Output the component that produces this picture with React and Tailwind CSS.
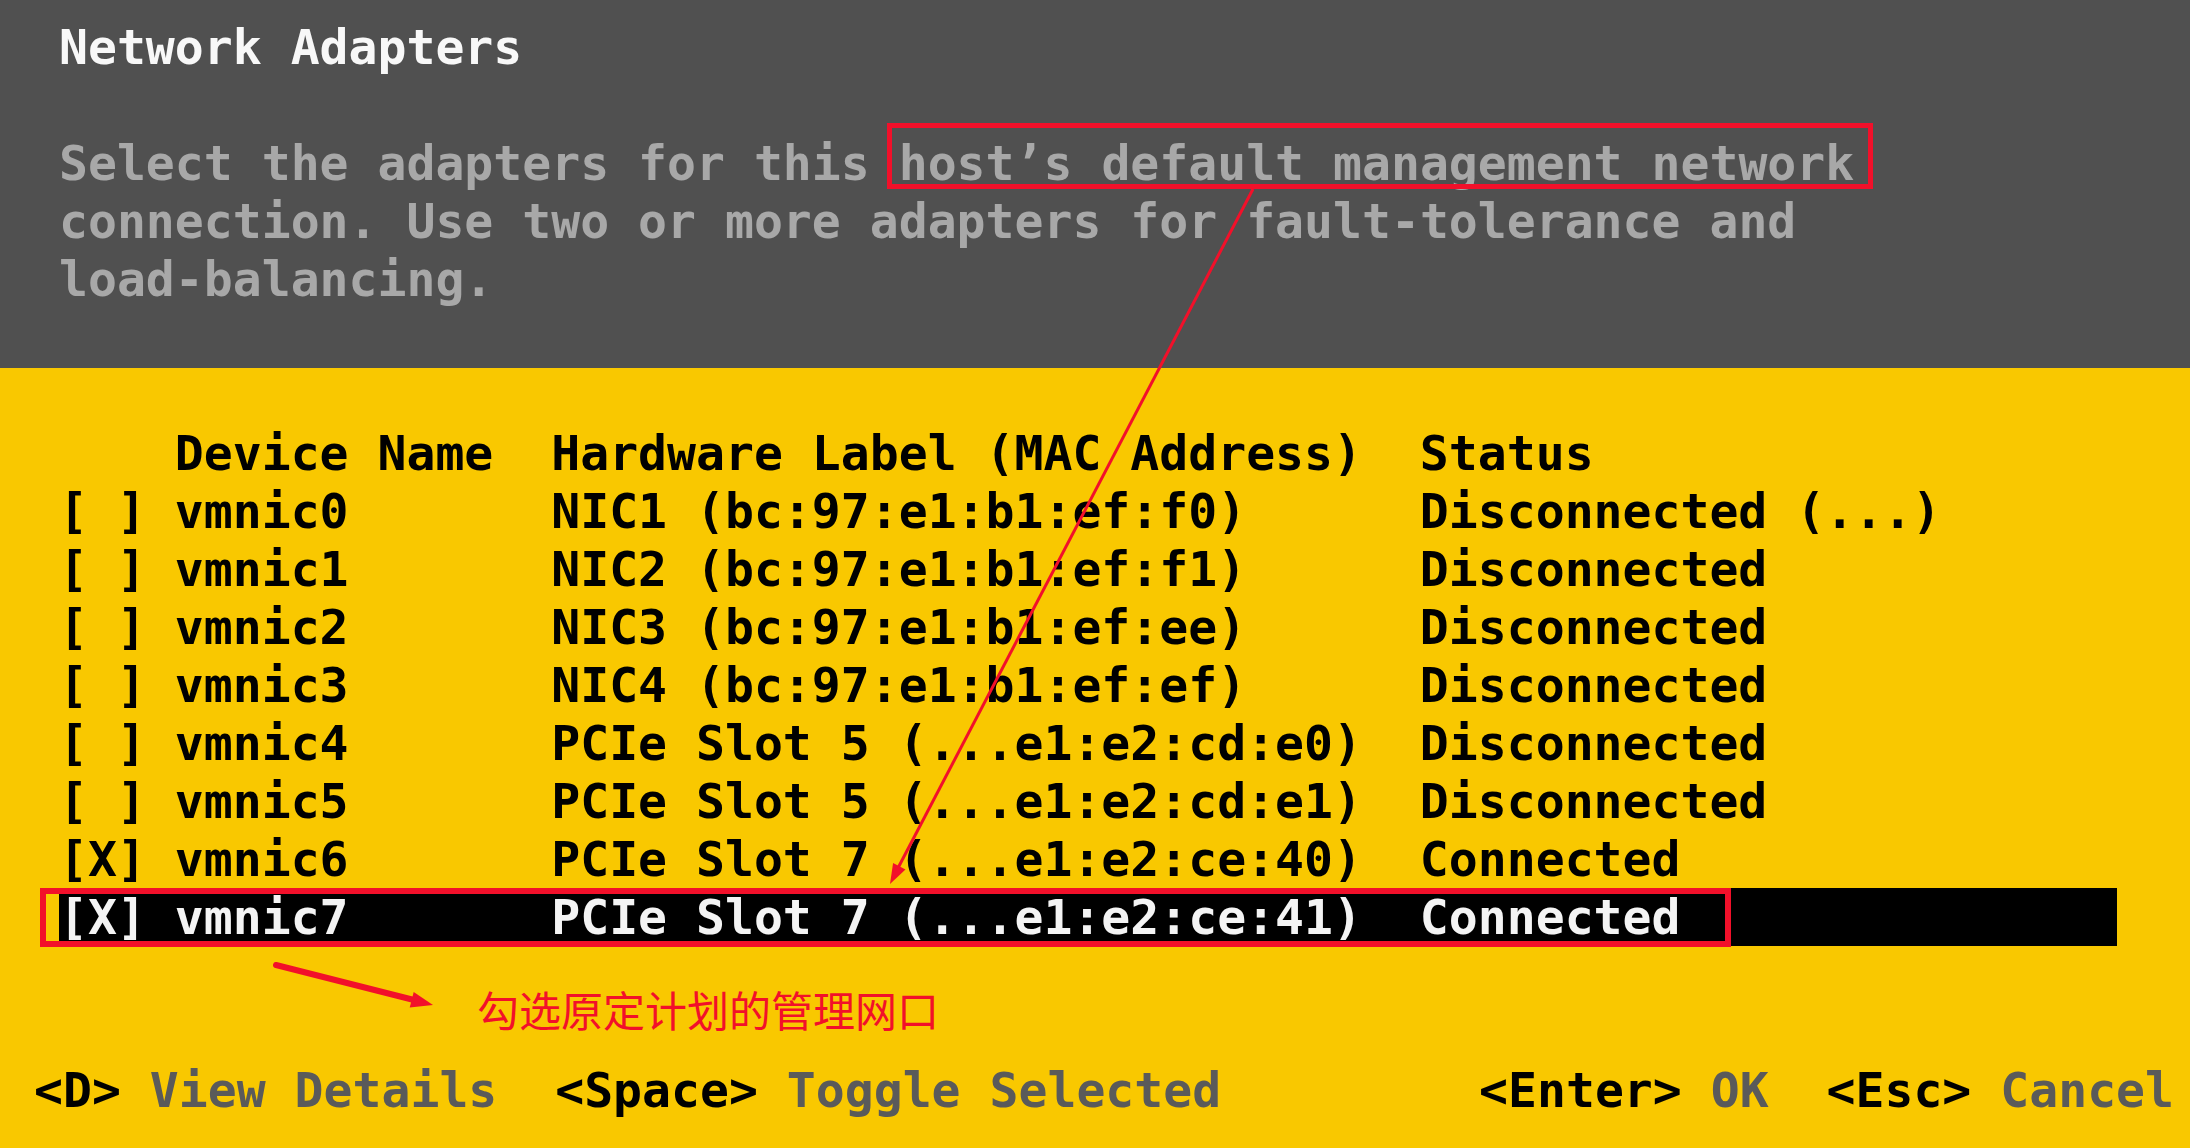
const rows = [
  ["[ ]", "vmnic0", "NIC1 (bc:97:e1:b1:ef:f0)", "Disconnected (...)"],
  ["[ ]", "vmnic1", "NIC2 (bc:97:e1:b1:ef:f1)", "Disconnected"],
  ["[ ]", "vmnic2", "NIC3 (bc:97:e1:b1:ef:ee)", "Disconnected"],
  ["[ ]", "vmnic3", "NIC4 (bc:97:e1:b1:ef:ef)", "Disconnected"],
  ["[ ]", "vmnic4", "PCIe Slot 5 (...e1:e2:cd:e0)", "Disconnected"],
  ["[ ]", "vmnic5", "PCIe Slot 5 (...e1:e2:cd:e1)", "Disconnected"],
  ["[X]", "vmnic6", "PCIe Slot 7 (...e1:e2:ce:40)", "Connected"],
  ["[X]", "vmnic7", "PCIe Slot 7 (...e1:e2:ce:41)", "Connected"],
];

function Row({ cells, selected }) {
  return (
    <div
      className={
        "grid grid-cols-[4ch_13ch_30ch_auto] h-[58px] w-[2058px] " +
        (selected ? "bg-black text-[#f4f4f4]" : "text-black")
      }
    >
      {cells.map((c, i) => (
        <span key={i} className="whitespace-pre">
          {c}
        </span>
      ))}
    </div>
  );
}

function Key({ k, label }) {
  return (
    <span className="whitespace-pre">
      <span className="text-black">{k}</span>
      <span className="text-[#5a5a5a]">{" " + label}</span>
    </span>
  );
}

export default function App() {
  return (
    <div className="relative w-[2190px] h-[1148px] overflow-hidden bg-[#f9c800] font-['DejaVu_Sans_Mono',monospace] font-bold text-[48.1px] leading-[58px]">
      {/* header */}
      <div className="h-[368px] bg-[#505050] pt-[18px] pl-[59px]">
        <div className="text-[#f8f8f8] whitespace-pre">Network Adapters</div>
        <div className="h-[58px]" />
        <div className="text-[#a8a8a8] whitespace-pre">
          <div>Select the adapters for this host’s default management network</div>
          <div>connection. Use two or more adapters for fault-tolerance and</div>
          <div>load-balancing.</div>
        </div>
      </div>

      {/* adapter list */}
      <div className="pt-[56px] pl-[59px]">
        <Row cells={["", "Device Name", "Hardware Label (MAC Address)", "Status"]} />
        {rows.map((r, i) => (
          <Row key={r[1]} cells={r} selected={i === rows.length - 1} />
        ))}
      </div>

      {/* footer keys */}
      <div className="mt-[115px] flex justify-between pl-[34px] pr-[16px]">
        <div className="flex gap-[2ch]">
          <Key k="<D>" label="View Details" />
          <Key k="<Space>" label="Toggle Selected" />
        </div>
        <div className="flex gap-[2ch]">
          <Key k="<Enter>" label="OK" />
          <Key k="<Esc>" label="Cancel" />
        </div>
      </div>

      {/* annotations */}
      <svg
        className="absolute inset-0 pointer-events-none"
        width="2190"
        height="1148"
        viewBox="0 0 2190 1148"
      >
        <rect x="889.5" y="125.5" width="981" height="61" fill="none" stroke="#f2102a" strokeWidth="5" />
        <rect x="43" y="891" width="1685" height="53" fill="none" stroke="#f2102a" strokeWidth="6" />
        <line x1="1253" y1="189" x2="898" y2="868" stroke="#f2102a" strokeWidth="3" />
        <polygon points="890,884 905.5,869.5 893.1,863.1" fill="#f2102a" />
        <line x1="276" y1="965" x2="414" y2="1000" stroke="#f2102a" strokeWidth="6" strokeLinecap="round" />
        <polygon points="433,1005 409.7,1007.4 413.7,991.9" fill="#f2102a" />
      </svg>
      <div className="absolute left-[477px] top-[988px] text-[42px] leading-[42px] font-normal text-[#f2102a] font-['Noto_Sans_CJK_SC',sans-serif] whitespace-pre">
        勾选原定计划的管理网口
      </div>
    </div>
  );
}
